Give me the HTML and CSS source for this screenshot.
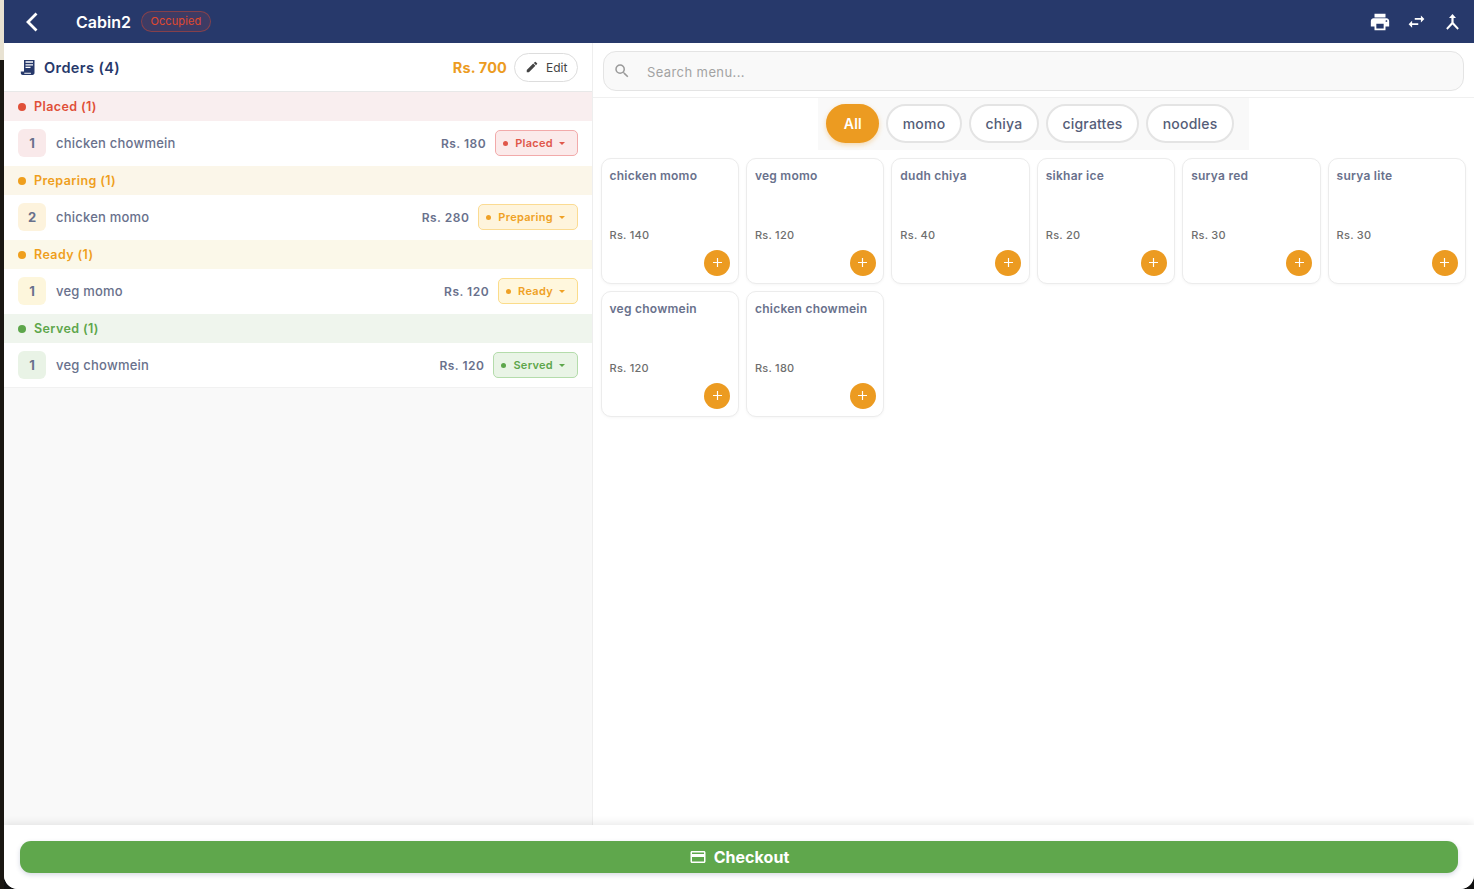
FILE: index.html
```html
<!DOCTYPE html>
<html lang="en">
<head>
<meta charset="utf-8">
<title>Cabin2</title>
<link rel="stylesheet" href="styles.css">
</head>
<body>
<div class="edge"><div class="edge-top"></div></div>
<div class="app">
  <header class="topbar">
    <button class="back" aria-label="Back"><svg width="16" height="22" viewBox="0 0 16 22"><path d="M12.5 2.5 4 11l8.500 8.500" fill="none" stroke="#fff" stroke-width="2.800"/></svg></button>
    <span class="title">Cabin2</span>
    <span class="occupied">Occupied</span>
    <div class="top-actions">
      <svg width="22" height="22" viewBox="0 0 24 24"><path fill="#fff" d="M19 8H5c-1.660 0-3 1.340-3 3v6h4v4h12v-4h4v-6c0-1.660-1.340-3-3-3zm-3 11H8v-5h8v5zm3-7c-.550 0-1-.450-1-1s.450-1 1-1 1 .450 1 1-.450 1-1 1zm-1-9H6v4h12V3z"/></svg>
      <svg width="21" height="21" viewBox="0 0 24 24"><path fill="#fff" d="M6.990 11 3 15l3.990 4v-3H14v-2H6.990v-3zM21 9l-3.990-4v3H10v2h7.010v3L21 9z"/></svg>
      <svg width="13" height="16" viewBox="0 0 13 16"><path fill="#fff" d="M6.500 0 10 4H7.600v4.500l5.200 5.800-1.300 1.500-5-5.300-5 5.300-1.300-1.500 5.200-5.800V4H3z"/></svg>
    </div>
  </header>
  <main class="content">
    <section class="orders">
      <div class="orders-head">
        <svg class="receipt" width="16" height="17" viewBox="0 0 16 17"><path fill="#27396b" d="M4 1h10.500v12.800c0 1.300-.8 2.200-2 2.200H2.800C1.600 16 .8 15.200.8 14v-1.500H4zM5.500 2.300v1.500h7.500V2.300zm0 3v1.200h7.500V5.300zm0 2.500V9h5V7.800zM4.300 13.800v1h6.800c-.2-.3-.3-.6-.3-1z"/></svg>
        <span class="orders-title">Orders (4)</span>
        <span class="total">Rs. 700</span>
        <button class="edit"><svg width="14" height="14" viewBox="0 0 24 24"><path fill="#444" d="M3 17.250V21h3.750L17.810 9.940l-3.750-3.750L3 17.250zM20.710 7.040a1 1 0 0 0 0-1.410l-2.340-2.340a1 1 0 0 0-1.410 0l-1.830 1.830 3.750 3.750 1.830-1.830z"/></svg>Edit</button>
      </div>

      <div class="group group-placed"><i class="dot"></i>Placed (1)</div>
      <div class="row">
        <span class="qty qty-placed">1</span><span class="item">chicken chowmein</span><span class="price">Rs. 180</span>
        <span class="status status-placed"><i class="sdot"></i>Placed<i class="caret"></i></span>
      </div>

      <div class="group group-preparing"><i class="dot"></i>Preparing (1)</div>
      <div class="row">
        <span class="qty qty-preparing">2</span><span class="item">chicken momo</span><span class="price">Rs. 280</span>
        <span class="status status-preparing"><i class="sdot"></i>Preparing<i class="caret"></i></span>
      </div>

      <div class="group group-ready"><i class="dot"></i>Ready (1)</div>
      <div class="row">
        <span class="qty qty-ready">1</span><span class="item">veg momo</span><span class="price">Rs. 120</span>
        <span class="status status-ready"><i class="sdot"></i>Ready<i class="caret"></i></span>
      </div>

      <div class="group group-served"><i class="dot"></i>Served (1)</div>
      <div class="row">
        <span class="qty qty-served">1</span><span class="item">veg chowmein</span><span class="price">Rs. 120</span>
        <span class="status status-served"><i class="sdot"></i>Served<i class="caret"></i></span>
      </div>
    </section>

    <section class="menu">
      <div class="search-wrap">
        <div class="search">
          <svg width="18" height="18" viewBox="0 0 24 24"><path fill="#9a9a9a" d="M15.500 14h-.790l-.280-.270A6.470 6.470 0 0 0 16 9.500 6.500 6.500 0 1 0 9.500 16c1.610 0 3.090-.590 4.230-1.570l.270.280v.790l5 4.990L20.490 19l-4.990-5zm-6 0C7.010 14 5 11.990 5 9.500S7.010 5 9.500 5 14 7.010 14 9.500 11.990 14 9.500 14z"/></svg>
          <span class="search-text">Search menu...</span>
        </div>
      </div>
      <div class="chips-wrap">
        <div class="chips">
          <span class="chip chip-active">All</span>
          <span class="chip">momo</span>
          <span class="chip">chiya</span>
          <span class="chip">cigrattes</span>
          <span class="chip">noodles</span>
        </div>
      </div>
      <div class="grid">
        <div class="card"><div class="card-name">chicken momo</div><div class="card-price">Rs. 140</div><span class="add"><svg width="9" height="9" viewBox="0 0 10 10"><path d="M5 0v10M0 5h10" stroke="#fff" stroke-width="1.300"/></svg></span></div>
        <div class="card"><div class="card-name">veg momo</div><div class="card-price">Rs. 120</div><span class="add"><svg width="9" height="9" viewBox="0 0 10 10"><path d="M5 0v10M0 5h10" stroke="#fff" stroke-width="1.300"/></svg></span></div>
        <div class="card"><div class="card-name">dudh chiya</div><div class="card-price">Rs. 40</div><span class="add"><svg width="9" height="9" viewBox="0 0 10 10"><path d="M5 0v10M0 5h10" stroke="#fff" stroke-width="1.300"/></svg></span></div>
        <div class="card"><div class="card-name">sikhar ice</div><div class="card-price">Rs. 20</div><span class="add"><svg width="9" height="9" viewBox="0 0 10 10"><path d="M5 0v10M0 5h10" stroke="#fff" stroke-width="1.300"/></svg></span></div>
        <div class="card"><div class="card-name">surya red</div><div class="card-price">Rs. 30</div><span class="add"><svg width="9" height="9" viewBox="0 0 10 10"><path d="M5 0v10M0 5h10" stroke="#fff" stroke-width="1.300"/></svg></span></div>
        <div class="card"><div class="card-name">surya lite</div><div class="card-price">Rs. 30</div><span class="add"><svg width="9" height="9" viewBox="0 0 10 10"><path d="M5 0v10M0 5h10" stroke="#fff" stroke-width="1.300"/></svg></span></div>
        <div class="card"><div class="card-name">veg chowmein</div><div class="card-price">Rs. 120</div><span class="add"><svg width="9" height="9" viewBox="0 0 10 10"><path d="M5 0v10M0 5h10" stroke="#fff" stroke-width="1.300"/></svg></span></div>
        <div class="card"><div class="card-name">chicken chowmein</div><div class="card-price">Rs. 180</div><span class="add"><svg width="9" height="9" viewBox="0 0 10 10"><path d="M5 0v10M0 5h10" stroke="#fff" stroke-width="1.300"/></svg></span></div>
      </div>
    </section>
  </main>
  <footer class="footer">
    <button class="checkout"><svg width="18" height="18" viewBox="0 0 24 24"><path fill="#fff" d="M20 4H4c-1.110 0-2 .890-2 2v12c0 1.110.890 2 2 2h16c1.110 0 2-.890 2-2V6c0-1.110-.890-2-2-2zm0 14H4v-6h16v6zm0-10H4V6h16v2z"/></svg>Checkout</button>
  </footer>
</div>
</body>
</html>
```
FILE: styles.css
```css
* { box-sizing: border-box; }
html, body { margin: 0; height: 100%; }
body {
  display: flex;
  height: 889px;
  overflow: hidden;
  background: #111;
  font-family: Inter, "Liberation Sans", sans-serif;
}
.edge { width: 4px; flex: none; background: #1a1712; }
.edge-top { height: 60px; background: #e8e2d2; }
.app {
  flex: 1;
  display: flex;
  flex-direction: column;
  min-width: 0;
  background: #fff;
  border-radius: 0 0 14px 14px;
  overflow: hidden;
}
.topbar {
  height: 43px;
  flex: none;
  display: flex;
  align-items: center;
  background: #27396b;
  color: #fff;
  padding: 0 10px 0 20px;
}
.back { width: 16px; height: 22px; padding: 0; border: 0; background: none; display: flex; margin-right: 36px; }
.title { font-size: 16px; font-weight: 600; margin-right: 10px; }
.occupied {
  font-size: 11px;
  color: #e0492f;
  background: rgba(224,73,47,.12);
  border: 1px solid rgba(224,73,47,.45);
  border-radius: 11px;
  padding: 3px 8.500px;
  line-height: 13px;
  letter-spacing: .1px;
}
.top-actions {
  margin-left: auto;
  display: grid;
  grid-template-columns: repeat(3, 24px);
  column-gap: 12px;
  justify-items: center;
  align-items: center;
}
.content { flex: 1; display: flex; min-height: 0; }
.orders {
  width: 589px;
  flex: none;
  background: #f9f9f9;
  border-right: 1px solid #eeeeee;
}
.orders-head {
  height: 49px;
  background: #fff;
  border-bottom: 1px solid #e8e8e8;
  display: flex;
  align-items: center;
  padding: 0 14px 0 16px;
}
.receipt { margin-right: 8px; }
.orders-title { font-size: 14.500px; font-weight: 600; color: #27396b; letter-spacing: .4px; }
.total { margin-left: auto; font-size: 14.500px; font-weight: 700; color: #ec9b21; margin-right: 7px; letter-spacing: .15px; }
.edit {
  height: 29px;
  width: 64px;
  display: flex;
  align-items: center;
  gap: 7px;
  padding: 0 0 0 10px;
  background: #fff;
  border: 1px solid #dddddd;
  border-radius: 15px;
  font: 12px Inter, sans-serif;
  color: #444;
}
.group {
  height: 29px;
  display: flex;
  align-items: center;
  padding-left: 14px;
  font-size: 12.500px;
  font-weight: 600;
  letter-spacing: .4px;
}
.dot { width: 8px; height: 8px; border-radius: 50%; background: currentColor; margin-right: 8px; }
.group-placed { background: #f9eeef; color: #e04f38; }
.group-preparing { background: #fbf6e9; color: #ef9f1d; }
.group-ready { background: #fbf8e9; color: #ef9f1d; }
.group-served { background: #eff5ed; color: #5da64b; }
.row {
  height: 45px;
  background: #fff;
  display: flex;
  align-items: center;
  padding: 0 14px 0 14px;
  border-bottom: 1px solid #fff;
}
.row:last-child { border-bottom-color: #f1f1f1; }
.qty {
  width: 28px;
  height: 28px;
  border-radius: 6px;
  display: flex;
  align-items: center;
  justify-content: center;
  font-size: 13px;
  font-weight: 700;
  color: #69718c;
  margin-right: 10px;
}
.qty-placed { background: #f9e9ea; }
.qty-preparing { background: #fdf3dd; }
.qty-ready { background: #fdf6dc; }
.qty-served { background: #e9f3e6; }
.item { font-size: 13px; font-weight: 500; color: #69718c; letter-spacing: .22px; }
.price { margin-left: auto; font-size: 12px; font-weight: 600; color: #69718c; margin-right: 9px; letter-spacing: .5px; }
.status {
  height: 26px;
  display: flex;
  align-items: center;
  padding: 0 12px 0 7px;
  border: 1px solid;
  border-radius: 5px;
  font-size: 11px;
  font-weight: 600;
  letter-spacing: .3px;
}
.sdot { width: 5px; height: 5px; border-radius: 50%; background: currentColor; margin-right: 7px; }
.caret { width: 0; height: 0; border: 3px solid transparent; border-top: 3.500px solid currentColor; border-bottom: 0; margin-left: 6px; }
.status-placed { background: #fbeaea; border-color: #f2aaaa; color: #e0574a; }
.status-preparing { background: #fef4dc; border-color: #fbdb92; color: #efa125; }
.status-ready { background: #fff7dd; border-color: #fbdc8a; color: #efa125; }
.status-served { background: #e9f4e6; border-color: #b4dcab; color: #5da64b; }
.menu { flex: 1; min-width: 0; display: flex; flex-direction: column; }
.search-wrap { height: 55px; flex: none; padding: 8px 10px 0; border-bottom: 1px solid #f0f0f0; }
.search {
  height: 40px;
  display: flex;
  align-items: center;
  gap: 16px;
  padding-left: 9px;
  background: #f9f9f9;
  border: 1px solid #e4e4e4;
  border-radius: 13px;
  font-size: 13px;
  color: #a3a3a3;
  letter-spacing: .4px;
}
.search-text { padding-top: 2px; }
.chips-wrap { display: flex; justify-content: center; flex: none; }
.chips {
  display: flex;
  gap: 6.500px;
  height: 52px;
  padding: 6px 14.500px 0 8px;
  background: #f9f9f9;
}
.chip {
  height: 39px;
  padding: 0 14.800px;
  display: flex;
  align-items: center;
  background: #fff;
  border: 2px solid #e4e4e4;
  border-radius: 20px;
  font-size: 14px;
  font-weight: 500;
  color: #555d78;
  letter-spacing: .2px;
}
.chip-active {
  padding: 0 15.500px;
  background: #ec9b21;
  border-color: #ec9b21;
  color: #fff;
  font-weight: 600;
  box-shadow: 0 2px 5px rgba(236,155,33,.35);
}
.grid {
  display: grid;
  grid-template-columns: repeat(6, 1fr);
  grid-auto-rows: 126px;
  gap: 7px;
  padding: 8px 8px 0 7.500px;
}
.card {
  position: relative;
  padding: 10px 8px;
  background: #fff;
  border: 1px solid #ececec;
  border-radius: 10px;
  box-shadow: 0 1px 3px rgba(0,0,0,.04);
}
.card-name { font-size: 12px; font-weight: 600; color: #69718c; line-height: 14px; letter-spacing: .25px; }
.card-price { margin-top: 45px; font-size: 11px; font-weight: 500; color: #6e6e6e; line-height: 14px; letter-spacing: .25px; }
.add {
  position: absolute;
  right: 7.500px;
  bottom: 7.500px;
  width: 26px;
  height: 26px;
  border-radius: 50%;
  background: #ec9b21;
  display: flex;
  align-items: center;
  justify-content: center;
}
.footer {
  height: 64px;
  flex: none;
  padding: 16px 16px 0;
  background: #fff;
  box-shadow: 0 -2px 8px rgba(0,0,0,.09);
  position: relative;
}
.checkout {
  width: 100%;
  height: 32px;
  display: flex;
  align-items: center;
  justify-content: center;
  gap: 7px;
  background: #5fa74c;
  border: 0;
  border-radius: 11px;
  color: #fff;
  font: 700 16px Inter, sans-serif;
  letter-spacing: .05px;
  box-shadow: 0 2px 5px rgba(39,57,107,.18);
}
```
